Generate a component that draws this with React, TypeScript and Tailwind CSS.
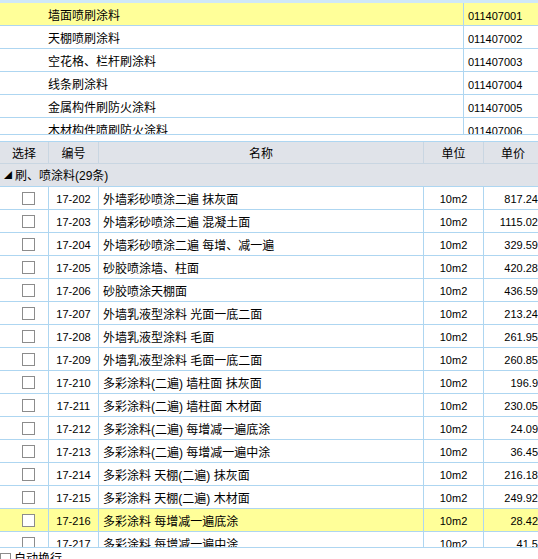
import React from 'react';

const topRows = [
  { name: '墙面喷刷涂料', code: '011407001', active: true },
  { name: '天棚喷刷涂料', code: '011407002' },
  { name: '空花格、栏杆刷涂料', code: '011407003' },
  { name: '线条刷涂料', code: '011407004' },
  { name: '金属构件刷防火涂料', code: '011407005' },
  { name: '木材构件喷刷防火涂料', code: '011407006' },
];

const items = [
  { no: '17-202', name: '外墙彩砂喷涂二遍 抹灰面', price: '817.24' },
  { no: '17-203', name: '外墙彩砂喷涂二遍 混凝土面', price: '1115.02' },
  { no: '17-204', name: '外墙彩砂喷涂二遍 每增、减一遍', price: '329.59' },
  { no: '17-205', name: '砂胶喷涂墙、柱面', price: '420.28' },
  { no: '17-206', name: '砂胶喷涂天棚面', price: '436.59' },
  { no: '17-207', name: '外墙乳液型涂料 光面一底二面', price: '213.24' },
  { no: '17-208', name: '外墙乳液型涂料 毛面', price: '261.95' },
  { no: '17-209', name: '外墙乳液型涂料 毛面一底二面', price: '260.85' },
  { no: '17-210', name: '多彩涂料(二遍) 墙柱面 抹灰面', price: '196.9' },
  { no: '17-211', name: '多彩涂料(二遍) 墙柱面 木材面', price: '230.05' },
  { no: '17-212', name: '多彩涂料(二遍) 每增减一遍底涂', price: '24.09' },
  { no: '17-213', name: '多彩涂料(二遍) 每增减一遍中涂', price: '36.45' },
  { no: '17-214', name: '多彩涂料 天棚(二遍) 抹灰面', price: '216.18' },
  { no: '17-215', name: '多彩涂料 天棚(二遍) 木材面', price: '249.92' },
  { no: '17-216', name: '多彩涂料 每增减一遍底涂', price: '28.42', active: true },
  { no: '17-217', name: '多彩涂料 每增减一遍中涂', price: '41.5' },
];

const Box = () => (
  <span className="block w-[13px] h-[13px] border border-[#8c8c8c] bg-white" />
);

export default function App() {
  return (
    <div
      className="w-[538px] h-[559px] overflow-hidden bg-white text-black text-[12px] leading-none"
      style={{ fontFamily: '"Liberation Sans", "Noto Sans CJK SC", sans-serif' }}
    >
      {/* 上部清单 */}
      <div className="h-[3px] bg-[#cfe8f8]" />
      <div className="h-[131px] overflow-hidden">
        {topRows.map((r) => (
          <div
            key={r.code}
            className={`flex h-[23px] border-b border-[#aed6f1] ${r.active ? 'bg-[#ffff99]' : ''}`}
          >
            <div className="w-[464px] shrink-0 flex items-center pt-[4px] pl-[48px] border-r border-[#aed6f1]">
              {r.name}
            </div>
            <div className="flex-1 flex items-center pt-[4px] pl-[4px] text-[11px]">{r.code}</div>
          </div>
        ))}
      </div>
      <div className="h-px bg-[#aed6f1]" />
      <div className="h-[6px]" />

      {/* 下部定额表 */}
      <div className="h-[407px] overflow-hidden border-b border-[#aed6f1]">
        <div className="w-[542px]">
          <div className="flex h-[23px] border-y border-t-[#aed6f1] border-b-[#c9d6e2] bg-[#e0e3e9]">
            <div className="w-[49px] shrink-0 flex items-center justify-center pt-[2px] border-r border-[#c9d6e2]">选择</div>
            <div className="w-[50px] shrink-0 flex items-center justify-center pt-[2px] border-r border-[#c9d6e2]">编号</div>
            <div className="w-[325px] shrink-0 flex items-center justify-center pt-[2px] border-r border-[#c9d6e2]">名称</div>
            <div className="w-[60px] shrink-0 flex items-center justify-center pt-[2px] border-r border-[#c9d6e2]">单位</div>
            <div className="w-[58px] shrink-0 flex items-center justify-center pt-[2px]">单价</div>
          </div>
          <div className="flex items-center h-[23px] pt-[2px] border-b border-[#aed6f1] bg-[#e0e3e9] pl-[4px]">
            <span className="text-[8px] mr-[3px]">◢</span>
            <span>刷、喷涂料(29条)</span>
          </div>
          {items.map((it) => (
            <div
              key={it.no}
              className={`flex h-[23px] border-b border-[#aed6f1] ${it.active ? 'bg-[#ffff99]' : ''}`}
            >
              <div className="w-[49px] shrink-0 flex items-center pl-[22px] border-r border-[#aed6f1]">
                <Box />
              </div>
              <div className="w-[50px] shrink-0 flex items-center justify-center pt-[3px] border-r border-[#aed6f1] text-[11px]">
                {it.no}
              </div>
              <div className="w-[325px] shrink-0 flex items-center pt-[3px] pl-[4px] border-r border-[#aed6f1] whitespace-nowrap">
                {it.name}
              </div>
              <div className="w-[60px] shrink-0 flex items-center justify-center pt-[3px] border-r border-[#aed6f1] text-[11px]">
                10m2
              </div>
              <div className="w-[58px] shrink-0 flex items-center justify-end pt-[3px] pr-[4px] text-[11px]">
                {it.price}
              </div>
            </div>
          ))}
        </div>
      </div>

      {/* 自动换行 */}
      <div className="flex items-start gap-[3px] pt-[5px] pl-0">
        <span className="block w-[11px] h-[11px] border border-[#8c8c8c] bg-white" />
        <span>自动换行</span>
      </div>
    </div>
  );
}
